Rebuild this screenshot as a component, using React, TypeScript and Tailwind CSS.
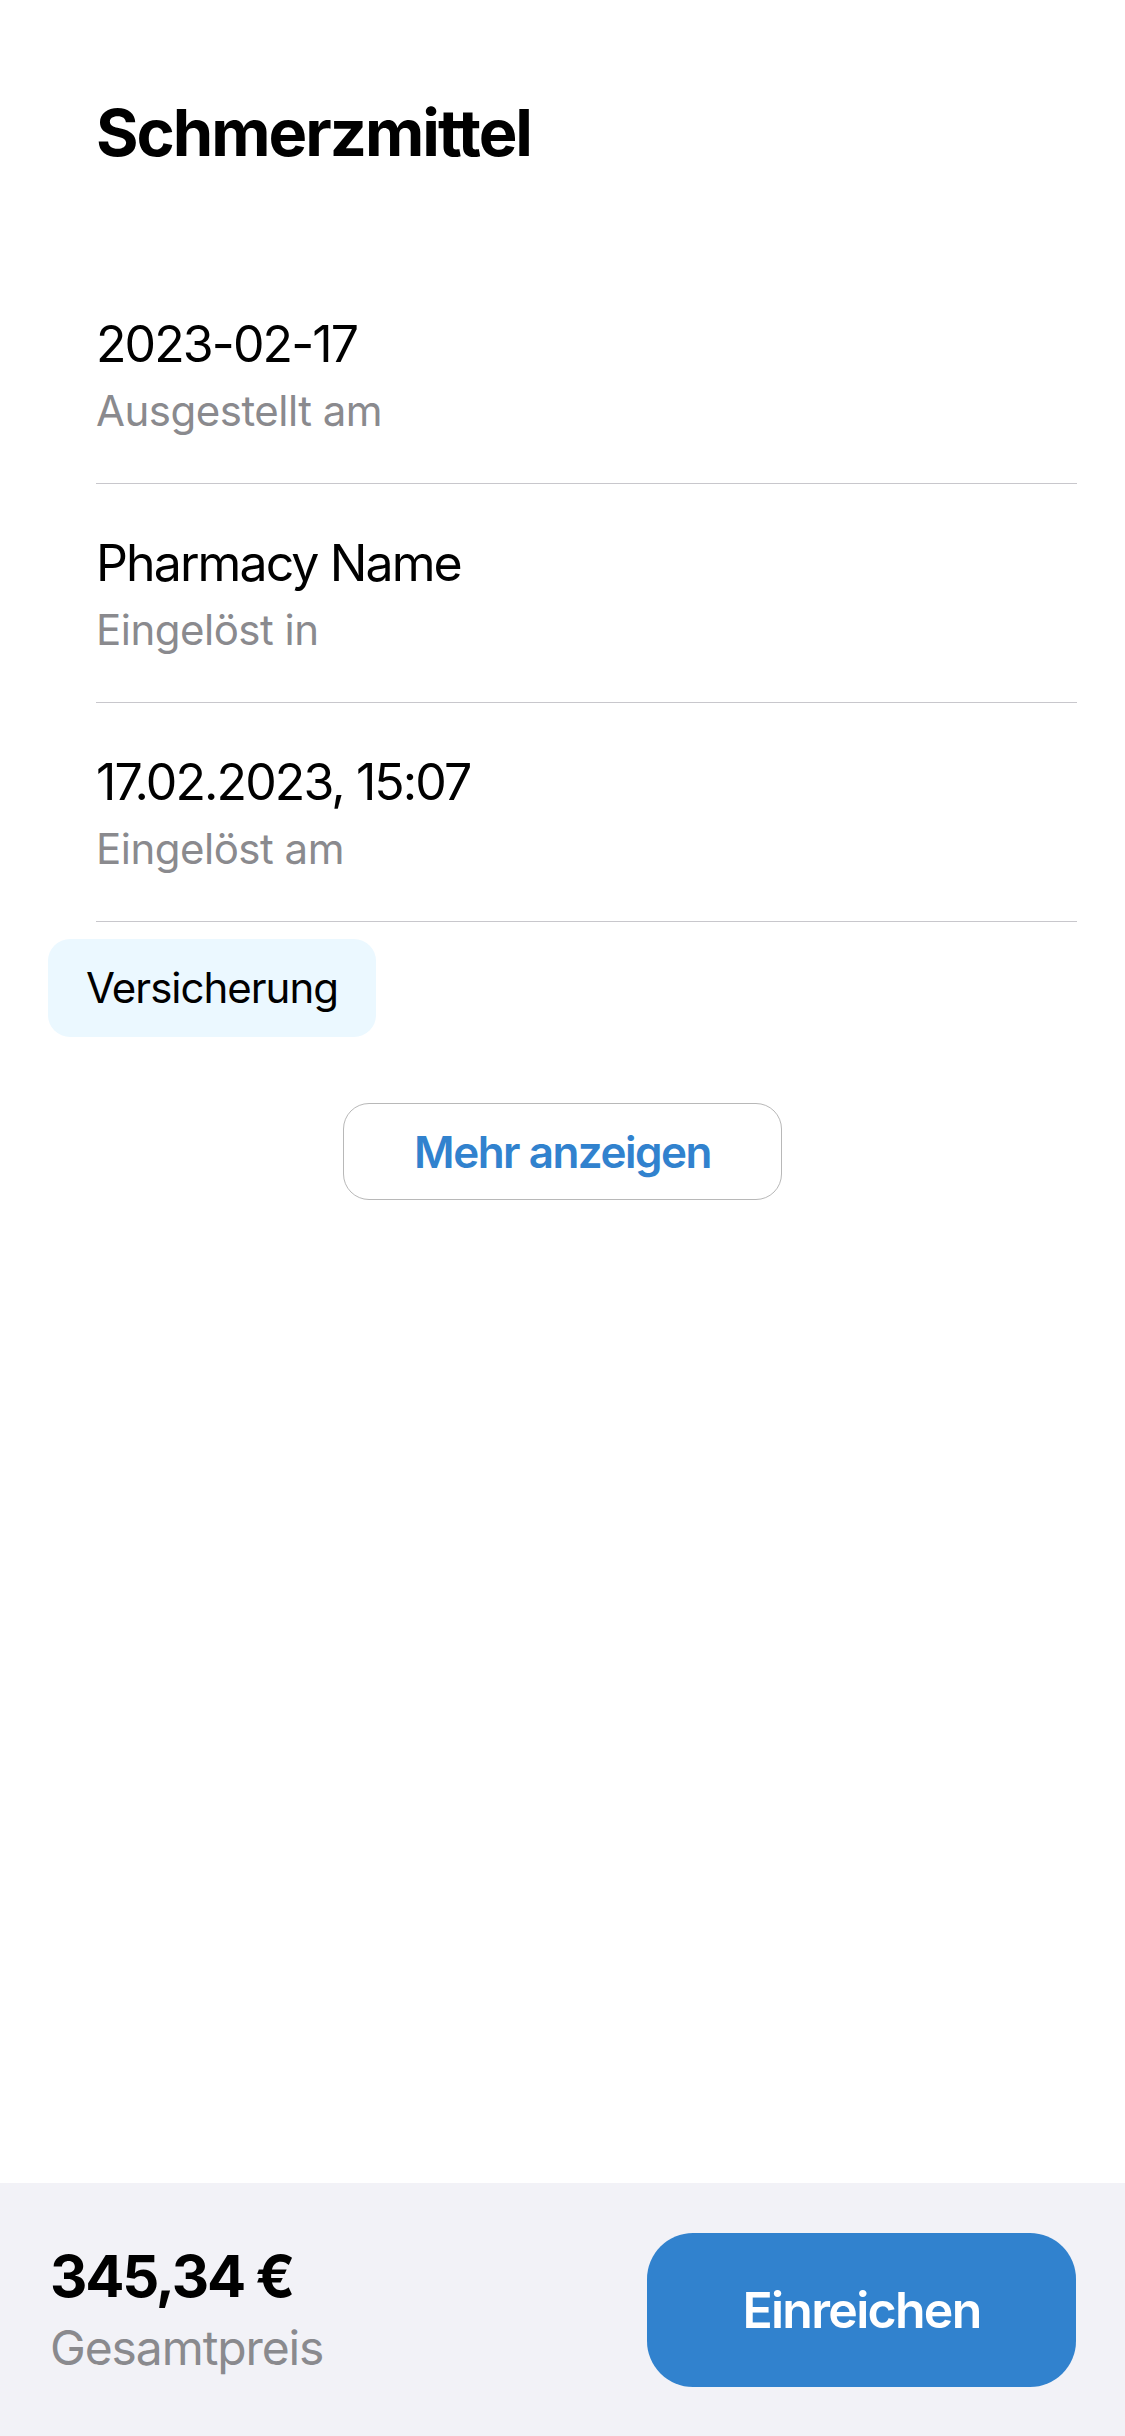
import React from 'react';

interface DetailRow {
  value: string;
  label: string;
}

const rows: DetailRow[] = [
  { value: '2023-02-17', label: 'Ausgestellt am' },
  { value: 'Pharmacy Name', label: 'Eingelöst in' },
  { value: '17.02.2023, 15:07', label: 'Eingelöst am' },
];

export default function App() {
  return (
    <div className="w-[1125px] h-[2436px] bg-white flex flex-col font-['Inter','Noto_Sans',sans-serif] text-black">
      {/* Content */}
      <div className="flex-1 flex flex-col px-[48px] pt-[100px]">
        <h1 className="ml-[48px] text-[65px] leading-none font-bold tracking-[-2px]">Schmerzmittel</h1>

        <div className="mt-[100px] ml-[48px] flex flex-col">
          {rows.map((row) => (
            <div key={row.label} className="pt-[54px] pb-[51px] border-b border-[#c8c7cc] flex flex-col gap-[21px]">
              <p className="text-[50px] leading-none tracking-[-1.9px]">{row.value}</p>
              <p className="text-[42px] leading-none tracking-[-0.5px] text-[#8a8a8e]">{row.label}</p>
            </div>
          ))}
        </div>

        <div className="mt-[17px] self-start h-[98px] px-[38px] flex items-center rounded-[22px] bg-[#ebf8ff]">
          <span className="text-[42px] leading-none tracking-[-1px]">Versicherung</span>
        </div>

        <div className="mt-[66px] flex justify-center">
          <button className="w-[439px] h-[97px] rounded-[26px] border-[1.5px] border-[#b8b8b8] bg-white flex items-center justify-center">
            <span className="text-[44px] leading-none font-semibold tracking-[-1.5px] text-[#3182ce]">Mehr anzeigen</span>
          </button>
        </div>
      </div>

      {/* Footer */}
      <div className="h-[253px] bg-[#f2f2f7] pl-[50px] pr-[49px] flex items-center justify-between">
        <div className="flex flex-col gap-[19px]">
          <span className="text-[58px] leading-none font-bold tracking-[-2.2px]">345,34 €</span>
          <span className="text-[48px] leading-none tracking-[-1.1px] text-[#8a8a8e]">Gesamtpreis</span>
        </div>
        <button className="w-[429px] h-[154px] rounded-[46px] bg-[#3182ce] flex items-center justify-center">
          <span className="text-[50px] leading-none font-semibold tracking-[-1.7px] text-white">Einreichen</span>
        </button>
      </div>
    </div>
  );
}
